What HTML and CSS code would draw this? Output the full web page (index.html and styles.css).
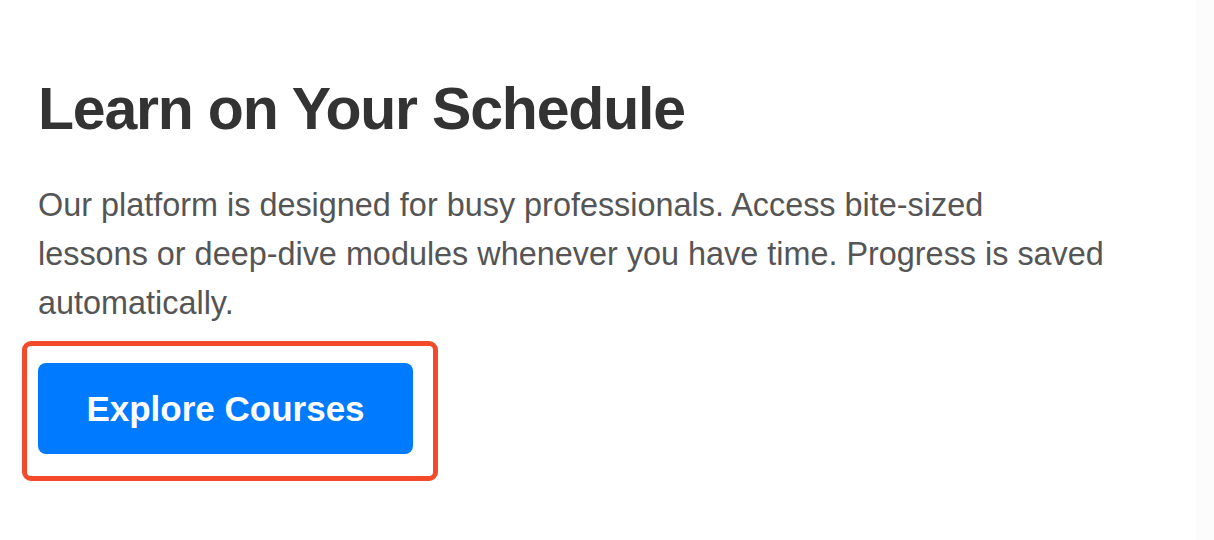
FILE: index.html
```html
<!DOCTYPE html>
<html lang="en">
<head>
<meta charset="utf-8">
<title>Learn on Your Schedule</title>
<link rel="stylesheet" href="styles.css">
</head>
<body>
<main class="hero">
  <h1 class="hero-title">Learn on Your Schedule</h1>
  <p class="hero-text">Our platform is designed for busy professionals. Access bite-sized<br>lessons or deep-dive modules whenever you have time. Progress is saved automatically.</p>
  <div class="cta-wrap">
    <a class="cta" href="#">Explore Courses</a>
    <span class="highlight"></span>
  </div>
</main>
<div class="scroll-track"></div>
</body>
</html>
```

FILE: styles.css
```css
html, body {
  margin: 0;
  padding: 0;
  background: #ffffff;
}
body {
  font-family: "Liberation Sans", Arial, Helvetica, sans-serif;
  width: 1214px;
  height: 540px;
  overflow: hidden;
  display: flex;
}
.hero {
  flex: 1;
  padding: 77px 0 0 38px;
  display: flex;
  flex-direction: column;
  align-items: flex-start;
}
.hero-title {
  margin: 0;
  font-size: 59px;
  letter-spacing: -1.2px;
  font-weight: 700;
  line-height: 64px;
  color: #333333;
}
.hero-text {
  margin: 40px 0 0 0;
  max-width: 1072px;
  font-size: 32.4px;
  line-height: 49px;
  color: #555555;
}
.cta-wrap {
  position: relative;
  margin-top: 35px;
}
.cta {
  display: block;
  width: 375px;
  height: 91px;
  box-sizing: border-box;
  background: #007bff;
  color: #ffffff;
  border-radius: 8px;
  font-size: 35px;
  font-weight: 700;
  line-height: 91px;
  text-align: center;
  text-decoration: none;
}
.highlight {
  position: absolute;
  left: -16px;
  top: -22px;
  width: 416px;
  height: 140px;
  box-sizing: border-box;
  border: 5px solid #f24a2a;
  border-radius: 9px;
  pointer-events: none;
}
.scroll-track {
  width: 18px;
  height: 540px;
  background: #fcfcfc;
}
```
